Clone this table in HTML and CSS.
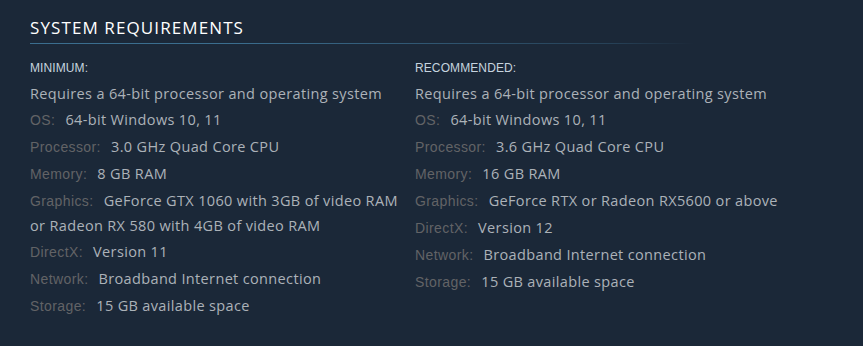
FILE: index.html
```html
<!DOCTYPE html>
<html>
<head>
<meta charset="utf-8">
<link rel="stylesheet" href="styles.css">
</head>
<body>
<div class="sysreq">
  <h2 class="title">SYSTEM REQUIREMENTS</h2>
  <div class="cols">
    <div class="col">
      <div class="head">MINIMUM:</div>
      <ul class="list">
        <li>Requires a 64-bit processor and operating system</li>
        <li><span class="lbl">OS:</span> 64-bit Windows 10, 11</li>
        <li><span class="lbl">Processor:</span> 3.0 GHz Quad Core CPU</li>
        <li><span class="lbl">Memory:</span> 8 GB RAM</li>
        <li><span class="lbl">Graphics:</span> GeForce GTX 1060 with 3GB of video RAM or Radeon RX 580 with 4GB of video RAM</li>
        <li><span class="lbl">DirectX:</span> Version 11</li>
        <li><span class="lbl">Network:</span> Broadband Internet connection</li>
        <li><span class="lbl">Storage:</span> 15 GB available space</li>
      </ul>
    </div>
    <div class="col">
      <div class="head">RECOMMENDED:</div>
      <ul class="list">
        <li>Requires a 64-bit processor and operating system</li>
        <li><span class="lbl">OS:</span> 64-bit Windows 10, 11</li>
        <li><span class="lbl">Processor:</span> 3.6 GHz Quad Core CPU</li>
        <li><span class="lbl">Memory:</span> 16 GB RAM</li>
        <li><span class="lbl">Graphics:</span> GeForce RTX or Radeon RX5600 or above</li>
        <li><span class="lbl">DirectX:</span> Version 12</li>
        <li><span class="lbl">Network:</span> Broadband Internet connection</li>
        <li><span class="lbl">Storage:</span> 15 GB available space</li>
      </ul>
    </div>
  </div>
</div>
</body>
</html>
```

FILE: styles.css
```css
html, body {
  margin: 0;
  padding: 0;
  background: #1b2838;
}
.sysreq {
  padding: 15px 0 0 30px;
  width: 663px;
}
.title {
  margin: 0;
  font-family: "Open Sans", sans-serif;
  font-weight: 400;
  font-size: 17px;
  line-height: 26px;
  color: #ffffff;
  letter-spacing: 1.1px;
  padding-bottom: 2px;
  border-bottom: 1px solid transparent;
  border-image: linear-gradient(to right, #3b6e8f 0%, #3b6e8f 30%, rgba(59,110,143,0.35) 88%, rgba(59,110,143,0) 100%) 1;
}
.cols {
  display: flex;
  padding-top: 16px;
}
.col {
  width: 385px;
  flex: none;
}
.head {
  font-family: "Liberation Sans", Arial, sans-serif;
  font-size: 12px;
  line-height: 16px;
  color: #c6d4df;
  letter-spacing: 0.1px;
  margin-bottom: 6px;
}
.list {
  list-style: none;
  margin: 0;
  padding: 0;
  font-family: "Open Sans", sans-serif;
  font-size: 14.5px;
  letter-spacing: 0.35px;
  line-height: 24px;
  color: #acb2b8;
}
.list li + li {
  margin-top: 2px;
}
.lbl {
  display: inline-block;
  line-height: 14px;
  padding-bottom: 6px;
  font-family: "Liberation Sans", Arial, sans-serif;
  font-size: 14px;
  letter-spacing: 0.4px;
  color: #626366;
  margin-right: 6px;
}
```
